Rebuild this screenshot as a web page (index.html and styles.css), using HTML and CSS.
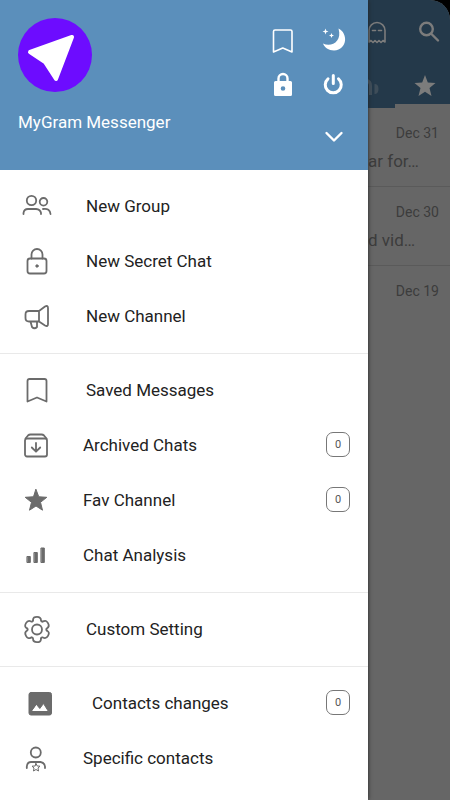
FILE: index.html
```html
<!DOCTYPE html>
<html lang="en">
<head>
<meta charset="utf-8">
<meta name="viewport" content="width=device-width, initial-scale=1">
<title>MyGram Messenger</title>
<link rel="stylesheet" href="styles.css">
</head>
<body>
<div class="app">
  <aside class="drawer">
    <header class="profile">
      <div class="identity">
        <svg class="avatar" viewBox="0 0 74 74" aria-hidden="true"><circle cx="37" cy="37" r="37" fill="#6d0cff"/><path d="M12 34 54 19 38 61 27 44Z" fill="#fff" stroke="#fff" stroke-width="4" stroke-linejoin="round"/></svg>
        <h1 class="name">MyGram Messenger</h1>
      </div>
      <div class="tools">
        <button class="tool" aria-label="Saved"><svg viewBox="0 0 28 28"><path class="line" d="M4.500 26V5.500Q4.500 4 6 4H21.500Q23 4 23 5.500V26L13.800 22Z"/></svg></button>
        <button class="tool" aria-label="Night mode"><svg viewBox="0 0 28 28"><path fill="currentColor" d="M18.500 2.500C28 7 28 23.500 14 24.500 8.500 24.500 4.500 21.500 3 17.500 11 21.500 22.500 16 18.500 2.500ZM5.500 2.500 6.300 4.700 8.500 5.500 6.300 6.300 5.500 8.500 4.700 6.300 2.500 5.500 4.700 4.700ZM11.500 7 12.200 8.800 14 9.500 12.200 10.200 11.500 12 10.800 10.200 9 9.500 10.800 8.800Z"/></svg></button>
        <button class="tool" aria-label="Lock"><svg viewBox="0 0 28 28"><path class="line heavy" d="M9.500 12V8.500a4.500 4.500 0 0 1 9 0V12"/><path fill="currentColor" fill-rule="evenodd" d="M6.500 11h15q1.500 0 1.500 1.500v12q0 1.500-1.500 1.500h-15Q5 26 5 24.500v-12Q5 11 6.500 11ZM14 16.200a2.300 2.300 0 1 0 0 4.600A2.300 2.300 0 0 0 14 16.200Z"/></svg></button>
        <button class="tool" aria-label="Power"><svg viewBox="0 0 28 28"><path class="line power" d="M8 8.800A8 8 0 1 0 18.500 8.800M13.300 5.500v8"/></svg></button>
        <button class="tool expand" aria-label="Show accounts"><svg viewBox="0 0 28 28"><path class="line heavy" d="M6.500 11 14 18.500 21.500 11"/></svg></button>
      </div>
    </header>
    <nav class="menu">
      <section class="group">
        <a class="item" href="#"><svg viewBox="0 0 30 30"><circle cx="9.500" cy="9.500" r="4.700"/><circle cx="21.500" cy="10.800" r="3.800"/><path d="M1.500 23V22Q2 18 6 18H14Q18.500 18.500 19 22V23M21 18Q28 17 28.500 23"/></svg><span>New Group</span></a>
        <a class="item" href="#"><svg viewBox="0 0 30 30"><path d="M9.500 12.500V8.500a5.500 5.500 0 0 1 11 0v4"/><rect x="5.500" y="12.500" width="19" height="15" rx="2.500"/><circle class="solid" cx="15" cy="20" r="1.200"/></svg><span>New Secret Chat</span></a>
        <a class="item" href="#"><svg viewBox="0 0 30 30"><path d="M17 10H7Q3.500 10 3.500 13.500V17Q3.500 20.500 7 20.500H17L23 24.500Q26 26 26 23V7Q26 4 23 5.500ZM17 10V20.500M8.500 20.500 10 26Q12.500 28.500 15 26V20.500"/></svg><span>New Channel</span></a>
      </section>
      <section class="group">
        <a class="item" href="#"><svg viewBox="0 0 30 30"><path d="M5.500 26.500V6Q5.500 4 7.500 4H22.500Q24.500 4 24.500 6V26.500L15 22.500Z"/></svg><span>Saved Messages</span></a>
        <a class="item near" href="#"><svg viewBox="0 0 30 30"><path d="M4.500 8.500 7 5.500Q8 4.500 9.500 4.500H20.500Q22 4.500 23 5.500L25.500 8.500M15 13V21M10.800 17.500 15 21.700 19.200 17.500"/><rect x="4" y="8.500" width="22" height="18" rx="2"/></svg><span>Archived Chats</span><b class="count">0</b></a>
        <a class="item near" href="#"><svg viewBox="0 0 30 30"><path class="solid" d="M15 4.500 17.800 11.800 25.800 12.300 19.500 17.300 21.500 25.200 15 21 8.500 25.200 10.500 17.300 4.200 12.300 12.200 11.800Z"/></svg><span>Fav Channel</span><b class="count">0</b></a>
        <a class="item near" href="#"><svg viewBox="0 0 30 30"><path class="solid" d="M6.300 16.500h3v6h-3ZM13.300 12.500h3v10h-3ZM20.300 8h3v14.500h-3Z"/></svg><span>Chat Analysis</span></a>
      </section>
      <section class="group">
        <a class="item" href="#"><svg viewBox="0 0 30 30"><defs><path id="tooth" d="M11 6.500C11 3.500 12.500 2.800 15 2.800S19 3.500 19 6.500Q19.500 8 20.800 7.500"/></defs><use href="#tooth"/><use href="#tooth" transform="rotate(60 15 15.500)"/><use href="#tooth" transform="rotate(120 15 15.500)"/><use href="#tooth" transform="rotate(180 15 15.500)"/><use href="#tooth" transform="rotate(240 15 15.500)"/><use href="#tooth" transform="rotate(300 15 15.500)"/><circle cx="15" cy="15.500" r="5"/></svg><span>Custom Setting</span></a>
      </section>
      <section class="group">
        <a class="item far" href="#"><svg viewBox="0 0 30 30"><path class="solid" fill-rule="evenodd" d="M6 4.500H24.500Q26.500 4.500 26.500 6.500V25Q26.500 27 24.500 27H6Q4 27 4 25V6.500Q4 4.500 6 4.500ZM6.500 23.500H23.500L18.500 15.500 14.800 20.500 11.500 16.500Z"/></svg><span>Contacts changes</span><b class="count">0</b></a>
        <a class="item near" href="#"><svg viewBox="0 0 30 30"><circle cx="14.800" cy="9.500" r="5"/><path d="M5.800 25V23.500Q6.200 19 10 19H19.500Q23.500 19.500 24 23.500V25"/><path class="thin" d="M15 20.500 16.200 23 19 23.200 17 25 17.500 28 15 26.500 12.500 28 13 25 11 23.200 13.800 23Z"/></svg><span>Specific contacts</span></a>
      </section>
    </nav>
  </aside>
  <main class="chats">
    <header class="topbar">
      <div class="actions">
        <svg viewBox="0 0 28 28" aria-hidden="true"><path class="line" d="M6 24V12.500a8 8 0 0 1 16 0V24L20 22.500 18 24.500 16 22.500 14 24.500 12 22.500 10 24.500 8 22.500ZM9.500 12.500h3M15.500 12.500h3"/></svg>
        <svg viewBox="0 0 28 28" aria-hidden="true"><circle class="line heavy" cx="11.500" cy="11" r="6.300"/><path class="line heavy" d="M16.500 16 23 22.500"/></svg>
      </div>
      <div class="actions tabs">
        <svg class="dim" viewBox="0 0 28 28" aria-hidden="true"><path fill="currentColor" d="M3 7Q12 6 12 14V23H9V14Q9 9 3 10ZM5 15h2v8H5ZM14.500 12q4 0 4 5t-4 5Z"/></svg>
        <svg viewBox="0 0 28 28" aria-hidden="true"><path fill="currentColor" d="M14 3 16.800 10.500 24.500 11 18.500 16 20.500 24 14 19.700 7.500 24 9.500 16 3.500 11 11.200 10.500Z"/></svg>
      </div>
    </header>
    <div class="marker"></div>
    <article class="chat"><time>Dec 31</time><p>ar for…</p></article>
    <article class="chat"><time>Dec 30</time><p>d vid…</p></article>
    <article class="chat last"><time>Dec 19</time></article>
  </main>
</div>
</body>
</html>
```
FILE: styles.css
```css
* { box-sizing: border-box; }

body {
  margin: 0;
  background: #000;
  font-family: Roboto, sans-serif;
  color: #222;
}

h1, p { margin: 0; font-weight: 400; }
svg { display: block; flex: none; }

.app {
  display: grid;
  grid-template-columns: 1fr 82px;
  min-height: 100vh;
}

.drawer {
  position: relative;
  background: #fff;
  box-shadow: 0 0 4px #222;
}

.profile {
  display: flex;
  justify-content: space-between;
  height: 170px;
  padding: 18px 9px 0 18px;
  background: #5b8fbb;
  color: #fff;
}

.avatar { width: 74px; height: 74px; }

.name {
  margin-top: 18px;
  font-size: 17px;
  line-height: 24px;
}

.tools {
  display: grid;
  grid-template-columns: 51px 51px;
  grid-template-rows: 44px 44px 60px;
}

.tool {
  display: grid;
  place-items: center;
  padding: 0;
  border: 0;
  background: none;
  color: inherit;
}

.tool svg { width: 28px; height: 28px; }
.expand { grid-column: 2; }

.line {
  fill: none;
  stroke: currentColor;
  stroke-width: 1.6;
  stroke-linejoin: round;
  stroke-linecap: round;
}

.heavy { stroke-width: 2.4; }
.power { stroke-width: 3; }

.group { padding: 8px 0 10px; }
.group + .group { border-top: 1px solid #e9e9e9; }

.item {
  display: flex;
  align-items: center;
  height: 55px;
  padding: 0 18px 0 22px;
  color: inherit;
  font-size: 17px;
  line-height: 24px;
  text-decoration: none;
}

.item svg {
  width: 30px;
  height: 30px;
  margin-right: 34px;
  fill: none;
  stroke: #6b6b6b;
  stroke-width: 1.8;
  stroke-linecap: round;
  stroke-linejoin: round;
}

.item .solid { fill: #6b6b6b; stroke-width: 1; }
.item .thin { stroke-width: 1; }
.near { padding-left: 21px; }
.near svg { margin-right: 32px; }
.far { padding-left: 25px; }
.far svg { margin-right: 37px; }

.count {
  width: 24px;
  height: 25px;
  margin-left: auto;
  border: 1px solid #777;
  border-radius: 7px;
  color: #555;
  font-size: 11px;
  font-weight: 400;
  line-height: 23px;
  text-align: center;
}

.chats {
  overflow: hidden;
  border-top-right-radius: 20px;
  background: #666;
  color: #3c3c3c;
}

.topbar {
  height: 104px;
  padding-top: 18px;
  background: #24394a;
  color: #7c7c7c;
}

.actions {
  display: flex;
  justify-content: space-between;
  padding: 0 7px 0 0;
}

.actions svg { width: 28px; height: 28px; }
.actions svg:first-child { margin-left: -5px; }
.tabs { padding: 26px 11px 0 0; }
.tabs svg:first-child { margin-left: -8px; }
.dim { opacity: 0.3; }

.marker { width: 27px; height: 4px; background: #24394a; }

.chat {
  height: 79px;
  padding: 15px 11px 0 0;
  border-bottom: 1px solid #5a5a5a;
}

.chat time {
  display: block;
  font-size: 14px;
  line-height: 20px;
  text-align: right;
}

.chat p {
  margin-top: 6px;
  font-size: 17px;
  line-height: 24px;
}

.last { border: 0; }
```
